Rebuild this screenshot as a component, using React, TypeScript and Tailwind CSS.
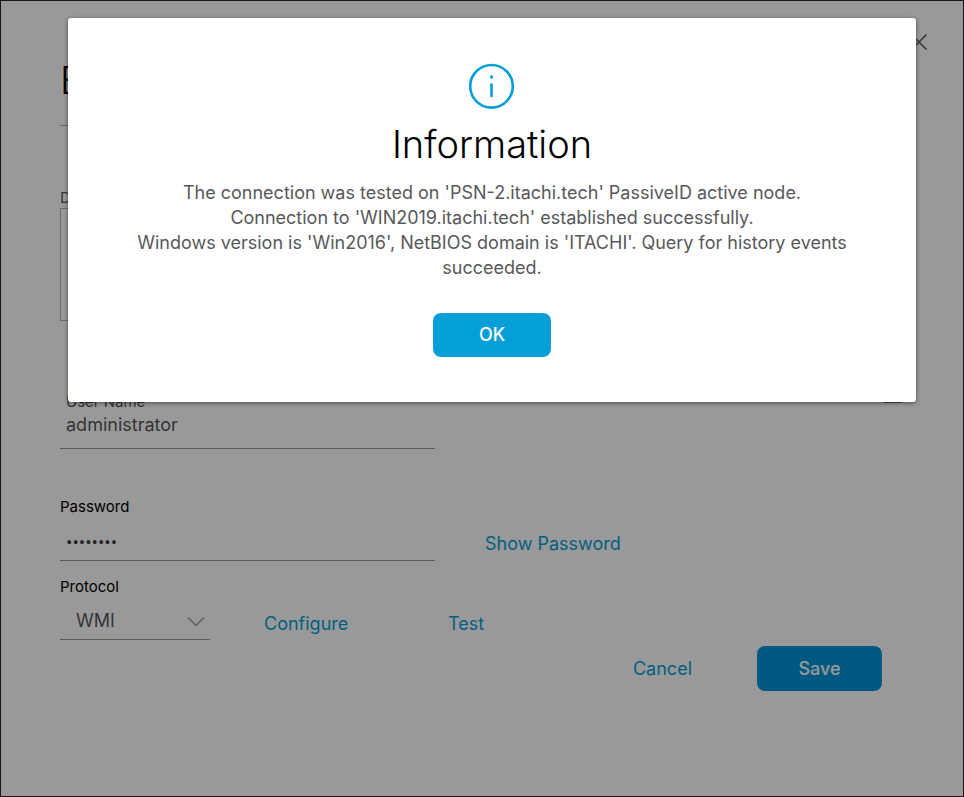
import type { ReactNode } from "react";

function LinkButton({ children }: { children: ReactNode }) {
  return (
    <button type="button" className="text-left text-lg leading-6 whitespace-nowrap text-[#049fd9]">
      {children}
    </button>
  );
}

function EditForm() {
  return (
    <form className="min-h-screen border border-[#26262b] bg-white pb-26">
      <div className="flex justify-end pt-[33px] pr-9">
        <button type="button" aria-label="Close" className="size-4 text-[#58585b]">
          <svg viewBox="0 0 16 16" className="size-4" fill="none" stroke="currentColor" strokeWidth="1.5">
            <path d="M0.5 0.5 15.5 15.5M15.5 0.5 0.5 15.5" />
          </svg>
        </button>
      </div>

      <div className="pr-[81px] pl-[59px]">
        <h1 className="border-b border-[#aaa] pt-1.5 pb-[21px] text-[38px] leading-12 font-light text-black">
          Edit
        </h1>

        <label htmlFor="description" className="mt-[62px] block text-[15px] leading-5 text-[#58585b]">
          Description
        </label>
        <textarea
          id="description"
          className="block h-[113px] w-full resize-none border border-[#b0b0b0]"
        />

        <div className="mt-[71px] flex items-start justify-between">
          <div className="w-[375px]">
            <label htmlFor="username" className="block px-1.5 text-[15px] leading-5 text-[#58585b]">
              User Name
            </label>
            <input
              id="username"
              type="text"
              defaultValue="administrator"
              className="block h-[37px] w-full border-b border-[#999] px-1.5 pb-3 text-lg leading-6 text-[#58585b] outline-none"
            />
          </div>
          <div className="-mr-5 h-[11px] w-[18px] border-b border-[#777]" />
        </div>

        <label htmlFor="password" className="mt-12 block text-[15px] leading-5 text-black">
          Password
        </label>
        <div className="flex items-end gap-[50px]">
          <input
            id="password"
            type="password"
            defaultValue="password"
            className="block h-11 w-[375px] border-b border-[#999] px-1.5 pt-1.5 font-['Open_Sans',sans-serif] text-[17px] text-[#39393b] outline-none"
          />
          <div className="pb-[5px]">
            <LinkButton>Show Password</LinkButton>
          </div>
        </div>

        <label htmlFor="protocol" className="mt-4 block text-[15px] leading-5 text-black">
          Protocol
        </label>
        <div className="mt-[5px] flex items-end">
          <div className="relative w-[150px]">
            <select
              id="protocol"
              defaultValue="WMI"
              className="block h-[38px] w-full appearance-none border-b border-[#999] bg-transparent pl-4 text-lg text-[#58585b] outline-none"
            >
              <option>WMI</option>
            </select>
            <svg
              viewBox="0 0 18 10"
              className="pointer-events-none absolute top-[15px] right-[5px] h-2.5 w-[18px]"
              fill="none"
              stroke="#9e9ea2"
              strokeWidth="1.5"
            >
              <path d="M1 0.5 9 8.5 17 0.5" />
            </svg>
          </div>
          <div className="flex pb-1 pl-[54px]">
            <div className="w-[184px]">
              <LinkButton>Configure</LinkButton>
            </div>
            <LinkButton>Test</LinkButton>
          </div>
        </div>

        <div className="mt-1.5 flex items-center justify-end gap-[65px]">
          <LinkButton>Cancel</LinkButton>
          <button
            type="submit"
            className="h-[45px] w-[125px] rounded-lg bg-[#0095d6] text-lg font-medium text-white"
          >
            Save
          </button>
        </div>
      </div>
    </form>
  );
}

function InformationDialog() {
  return (
    <div className="absolute inset-0 bg-black/40 pt-[18px] pr-12 pl-[68px]">
      <div
        role="dialog"
        aria-modal="true"
        aria-labelledby="dialog-title"
        className="flex flex-col items-center rounded-[3px] bg-white px-10 pt-[45px] pb-[45px] shadow-[0_1px_4px_rgba(0,0,0,0.5)]"
      >
        <svg viewBox="0 0 46 46" className="size-[46px]" fill="none" stroke="#049fd9" strokeLinecap="round">
          <circle cx="22.5" cy="23.3" r="21.3" strokeWidth="2.6" />
          <path d="M22.5 21.5V33" strokeWidth="2.6" />
          <path d="M22.5 13.6V14.4" strokeWidth="2.8" />
        </svg>
        <h2 id="dialog-title" className="mt-[11px] text-[38px] leading-12 font-light text-black">
          Information
        </h2>
        <p className="mt-3 text-center text-lg leading-[25px] text-[#58585b]">
          The connection was tested on 'PSN-2.itachi.tech' PassiveID active node.
          <br />
          Connection to 'WIN2019.itachi.tech' established successfully.
          <br />
          Windows version is 'Win2016', NetBIOS domain is 'ITACHI'. Query for history events
          <br />
          succeeded.
        </p>
        <button
          type="button"
          className="mt-[33px] h-11 w-[118px] rounded-lg bg-[#049fd9] text-lg font-medium text-white"
        >
          OK
        </button>
      </div>
    </div>
  );
}

export default function App() {
  return (
    <div className="relative min-h-screen font-[Inter,sans-serif]">
      <EditForm />
      <InformationDialog />
    </div>
  );
}
